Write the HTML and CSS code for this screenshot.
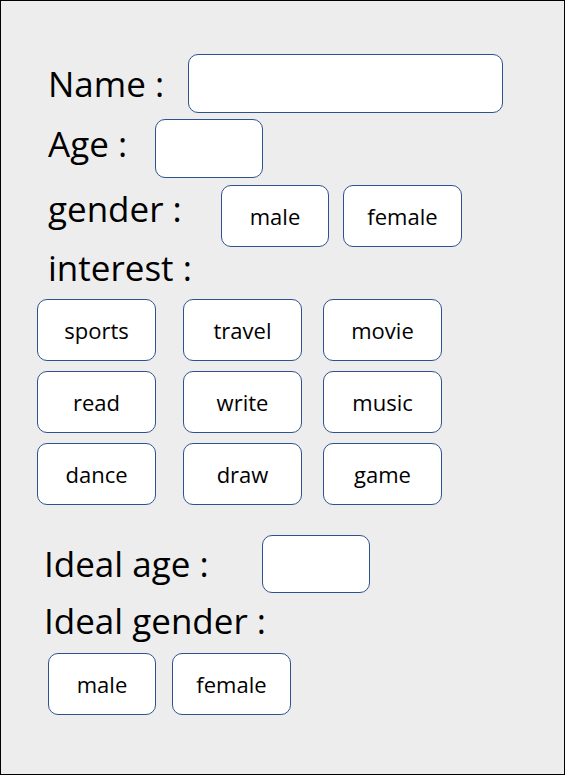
FILE: index.html
```html
<!DOCTYPE html>
<html lang="en">
<head>
<meta charset="utf-8">
<title>Profile form</title>
<link rel="stylesheet" href="styles.css">
</head>
<body>
<div class="frame">
  <div class="row row--name">
    <span class="label label--name">Name :</span>
    <div class="box box--name"></div>
  </div>
  <div class="row row--age">
    <span class="label label--age">Age :</span>
    <div class="box box--age"></div>
  </div>
  <div class="row row--gender">
    <span class="label label--gender">gender :</span>
    <div class="chips chips--gender">
      <div class="chip chip--male">male</div>
      <div class="chip chip--female">female</div>
    </div>
  </div>
  <div class="label label--interest">interest :</div>
  <div class="grid">
    <div class="chip">sports</div>
    <div class="chip">travel</div>
    <div class="chip">movie</div>
    <div class="chip">read</div>
    <div class="chip">write</div>
    <div class="chip">music</div>
    <div class="chip">dance</div>
    <div class="chip">draw</div>
    <div class="chip">game</div>
  </div>
  <div class="row row--ideal-age">
    <span class="label label--ideal-age">Ideal age :</span>
    <div class="box box--ideal-age"></div>
  </div>
  <div class="label label--ideal-gender">Ideal gender :</div>
  <div class="chips chips--ideal">
    <div class="chip chip--male">male</div>
    <div class="chip chip--female">female</div>
  </div>
</div>
</body>
</html>
```
FILE: styles.css
```css
* { box-sizing: border-box; }
html, body { margin: 0; padding: 0; background: #ffffff; }
body { font-family: "Open Sans", "Liberation Sans", sans-serif; color: #000; }

.frame {
  width: 565px;
  height: 775px;
  border: 1px solid #000;
  background: #ededed;
  padding-top: 53px;
}

.row { display: flex; align-items: flex-start; }
.row--name { padding-left: 47px; }
.row--age { padding-left: 47px; margin-top: 6px; }
.row--gender { padding-left: 47px; margin-top: 7px; }
.row--ideal-age { padding-left: 43px; margin-top: 30px; }

.label {
  font-size: 35px;
  line-height: 40px;
  white-space: nowrap;
}
.label--name { width: 140px; margin-top: 10px; }
.label--age { width: 107px; margin-top: 5px; }
.label--gender { width: 173px; margin-top: 4px; }
.label--interest { padding-left: 47px; margin-top: 1px; }
.label--ideal-age { width: 218px; margin-top: 9px; }
.label--ideal-gender { padding-left: 43px; margin-top: 8px; }

.box {
  background: #fff;
  border: 1px solid #2f528f;
  border-radius: 10px;
}
.box--name { width: 315px; height: 59px; }
.box--age { width: 108px; height: 59px; }
.box--ideal-age { width: 108px; height: 58px; }

.chips { display: flex; }
.chips--gender { gap: 14px; }
.chips--ideal { gap: 16px; padding-left: 47px; margin-top: 12px; }

.chip {
  width: 119px;
  height: 62px;
  background: #fff;
  border: 1px solid #2f528f;
  border-radius: 10px;
  display: flex;
  align-items: center;
  justify-content: center;
  font-size: 22px;
}
.chip--male { width: 108px; }
.chip--female { width: 119px; }

.grid {
  display: grid;
  grid-template-columns: 146px 140px 119px;
  grid-auto-rows: 62px;
  row-gap: 10px;
  padding-left: 36px;
  margin-top: 11px;
}
```
